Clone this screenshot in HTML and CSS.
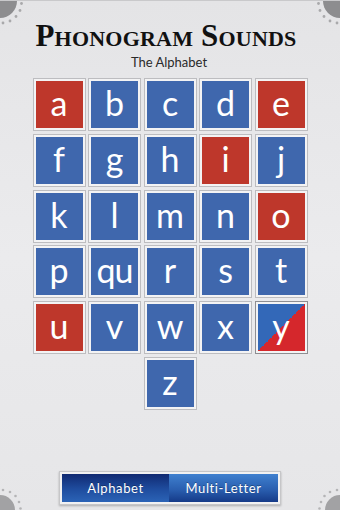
FILE: index.html
```html
<!DOCTYPE html>
<html>
<head>
<meta charset="utf-8">
<link rel="stylesheet" href="styles.css">
</head>
<body>
<div class="screen">
  <svg class="corner corner-tl" width="40" height="40" viewBox="0 0 40 40">
    <circle cx="0" cy="0" r="17" fill="#8d8d8f"/>
    <g fill="#a9a9ab">
      <circle cx="21.5" cy="2.5" r="1.4"/><circle cx="20" cy="9.5" r="1.4"/><circle cx="16" cy="15.5" r="1.4"/><circle cx="10" cy="20" r="1.4"/><circle cx="3" cy="22" r="1.4"/>
    </g>
  </svg>
  <svg class="corner corner-tr" width="40" height="40" viewBox="0 0 40 40">
    <circle cx="40" cy="0" r="17" fill="#8d8d8f"/>
    <g fill="#a9a9ab">
      <circle cx="18.5" cy="2.5" r="1.4"/><circle cx="20" cy="9.5" r="1.4"/><circle cx="24" cy="15.5" r="1.4"/><circle cx="30" cy="20" r="1.4"/><circle cx="37" cy="22" r="1.4"/>
    </g>
  </svg>
  <svg class="corner corner-bl" width="40" height="40" viewBox="0 0 40 40">
    <circle cx="0" cy="40" r="15" fill="#a2a2a4"/>
    <g fill="#b4b4b6">
      <circle cx="3" cy="20" r="1.3"/><circle cx="10" cy="22" r="1.3"/><circle cx="15.5" cy="26" r="1.3"/><circle cx="19" cy="32" r="1.3"/><circle cx="20.5" cy="38.5" r="1.3"/>
    </g>
  </svg>
  <svg class="corner corner-br" width="40" height="40" viewBox="0 0 40 40">
    <circle cx="40" cy="40" r="15" fill="#a2a2a4"/>
    <g fill="#b4b4b6">
      <circle cx="37" cy="20" r="1.3"/><circle cx="30" cy="22" r="1.3"/><circle cx="24.5" cy="26" r="1.3"/><circle cx="21" cy="32" r="1.3"/><circle cx="19.5" cy="38.5" r="1.3"/>
    </g>
  </svg>

  <h1 class="title">Phonogram Sounds</h1>
  <p class="subtitle">The Alphabet</p>

  <div class="grid">
    <div class="tile red"><span>a</span></div>
    <div class="tile blue"><span>b</span></div>
    <div class="tile blue"><span>c</span></div>
    <div class="tile blue"><span>d</span></div>
    <div class="tile red"><span>e</span></div>
    <div class="tile blue"><span>f</span></div>
    <div class="tile blue"><span>g</span></div>
    <div class="tile blue"><span>h</span></div>
    <div class="tile red"><span>i</span></div>
    <div class="tile blue"><span>j</span></div>
    <div class="tile blue"><span>k</span></div>
    <div class="tile blue"><span>l</span></div>
    <div class="tile blue"><span>m</span></div>
    <div class="tile blue"><span>n</span></div>
    <div class="tile red"><span>o</span></div>
    <div class="tile blue"><span>p</span></div>
    <div class="tile blue"><span class="qu">qu</span></div>
    <div class="tile blue"><span>r</span></div>
    <div class="tile blue"><span>s</span></div>
    <div class="tile blue"><span>t</span></div>
    <div class="tile red"><span>u</span></div>
    <div class="tile blue"><span>v</span></div>
    <div class="tile blue"><span>w</span></div>
    <div class="tile blue"><span>x</span></div>
    <div class="tile split"><span>y</span></div>
    <div class="tile blue z"><span>z</span></div>
  </div>

  <div class="segmented">
    <div class="seg seg-on">Alphabet</div>
    <div class="seg seg-off">Multi-Letter</div>
  </div>
</div>
</body>
</html>
```
FILE: styles.css
```css
html, body {
  margin: 0;
  padding: 0;
}
body {
  width: 340px;
  height: 510px;
  overflow: hidden;
  font-family: Lato, "Open Sans", sans-serif;
}
.screen {
  position: relative;
  width: 340px;
  height: 510px;
  box-sizing: border-box;
  background: linear-gradient(to bottom, #e4e4e6 0%, #ebebed 50%, #e6e6e8 100%);
  border-top: 1px solid #c9c9cb;
  display: flex;
  flex-direction: column;
  align-items: center;
}
.corner {
  position: absolute;
}
.corner-tl { left: 0; top: 0; }
.corner-tr { right: 0; top: 0; }
.corner-bl { left: 0; bottom: 0; }
.corner-br { right: 0; bottom: 0; }

.title {
  margin: 18px 8px 0 0;
  font-family: "Liberation Serif", "DejaVu Serif", serif;
  font-weight: bold;
  font-variant: small-caps;
  font-size: 31px;
  line-height: 34px;
  color: #111;
  letter-spacing: 0.2px;
}
.subtitle {
  margin: 1px 2px 0 0;
  font-size: 13px;
  line-height: 16px;
  color: #2a2a2a;
}
.grid {
  margin-top: 9px;
  display: grid;
  grid-template-columns: repeat(5, 51px);
  grid-auto-rows: 51px;
  column-gap: 4.5px;
  row-gap: 4.8px;
}
.tile {
  box-sizing: border-box;
  border: 2px solid #f3f3f4;
  box-shadow: 0 0 0 1px #bdbdc0;
  color: #fff;
  text-align: center;
  font-size: 34px;
  line-height: 44px;
}
.tile span {
  display: block;
}
.qu {
  letter-spacing: -1px;
}
.blue { background: #3f67ad; }
.red { background: #be372b; }
.split {
  background: linear-gradient(to bottom right, #3368b8 50%, #d5272c 50%);
  box-shadow: 0 0 0 1px #8e8e92;
}
.z {
  grid-column: 3;
}
.segmented {
  margin-top: auto;
  margin-bottom: 5px;
  display: flex;
  padding: 2px;
  border: 1px solid #c6c6c8;
  background: #f1f1f2;
  box-shadow: 0 1px 2px rgba(0,0,0,0.25);
}
.seg {
  height: 28px;
  line-height: 28px;
  color: #fff;
  font-size: 13px;
  letter-spacing: 0.6px;
  text-align: center;
  text-shadow: 0 -1px 0 rgba(0,0,0,0.3);
}
.seg-on {
  width: 107px;
  background: linear-gradient(to bottom, #102a72 0%, #1f4d9f 55%, #2b63b6 100%);
}
.seg-off {
  width: 109px;
  background: linear-gradient(to bottom, #3f80cf 0%, #2a5fb0 55%, #153a88 100%);
}
```
